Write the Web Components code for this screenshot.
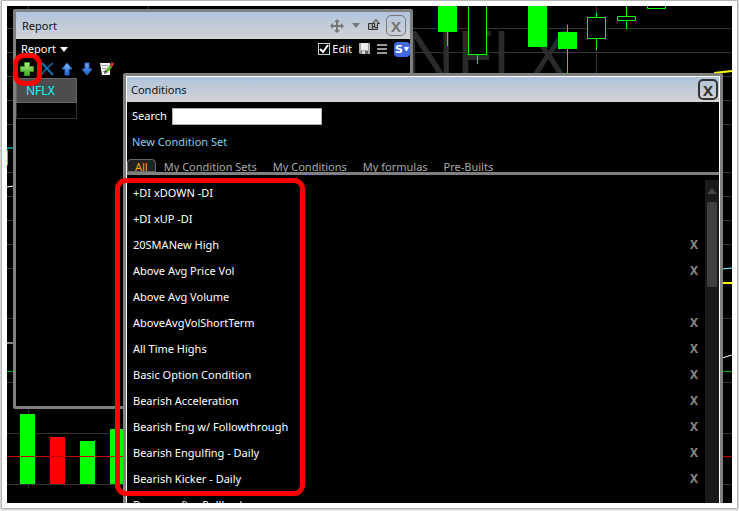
<!DOCTYPE html>
<html lang="en">
<head>
<meta charset="utf-8">
<title>Conditions</title>
<style>
  html, body { height: 100%; }
  body {
    margin: 0;
    background: #fff;
    font: 11px/16px "Noto Sans", "Open Sans", sans-serif;
    color: #fff;
  }
</style>
</head>
<body>
<desk-stage>
  <price-chart slot="back"></price-chart>

  <report-window></report-window>
  <conditions-window></conditions-window>
</desk-stage>

<script>
/**
 * Base class that fills an open shadow root from a string.
 * @class BaseElement
 * @extends HTMLElement
 */
class BaseElement extends HTMLElement {
  constructor() {
    super();
    this.attachShadow({ mode: "open" });
  }

  connectedCallback() {
    this.shadowRoot.innerHTML = this.template();
  }

  template() {
    return "";
  }
}

/**
 * White framed area which holds the chart and the windows over it.
 * @class DeskStage
 */
class DeskStage extends BaseElement {
  template() {
    return `
      <style>
        :host { display: block; box-sizing: border-box; height: 100vh; padding: 1px 2px 3px 2px; background: #f0f0f0; }
        .frame { box-sizing: border-box; height: 100%; padding: 5px; background: #fff; box-shadow: 0 0 2px 1px #999; }
        .desk { position: relative; height: 100%; overflow: hidden; background: #000; }
      </style>
      <div class="frame">
        <div class="desk"><slot name="back"></slot><slot></slot></div>
      </div>
    `;
  }
}

/**
 * Candles, volume bars and grid behind the windows.
 * @class PriceChart
 */
class PriceChart extends BaseElement {
  template() {
    const rows = [28, 52, 76, 100, 124, 172, 196, 220, 244, 268, 318, 382, 433, 484];
    const grid = rows.map((y) => `<path d="M7 ${y}.5H732"/>`).join("");
    return `
      <style>
        :host { display: block; height: 100%; }
        svg { display: block; width: 100%; height: 100%; }
        text { font: 70px "Open Sans", sans-serif; fill: #2a2a2a; }
      </style>
      <svg viewBox="7 6 725 497" preserveAspectRatio="xMinYMin slice" aria-hidden="true">
        <text x="403" y="81">NFLX</text>
        <g stroke="#333">${grid}<path d="M28.5 6V488M148.5 6V20M447.5 6V74M596.5 6V74"/></g>
        <g stroke="#0f0" fill="#0f0">
          <path d="M447.5 30V46M477.5 54V64M567.5 25V74M596.5 13V50M626.5 6V29"/>
          <path d="M438 6h19v26h-19zM528 6h19v41h-19zM558 32h19v17h-19z" stroke="none"/>
          <path d="M468.5 4V54.5H486.5V4M647.5 4V8.5H665.5V4M587.5 17.5h18v21h-18zM617.5 16.5h18v4h-18z" fill="#000"/>
        </g>
        <g fill="#0f0"><path d="M20 414h15v70H20zM80 441h15v43H80zM110 429h15v55h-15zM7 150h1v15H7z"/><path fill="#f00" d="M50 437h15v47H50z"/></g>
        <path d="M7 456.5H732" stroke="#c40000"/>
        <path d="M7 148H14" stroke="#008080" stroke-width="2"/>
        <path d="M7 187L14 186M722 358L732 355" stroke="#fff"/>
        <path d="M7 343H14" stroke="#808080" stroke-width="2"/>
        <path d="M7 371.5H732" stroke="#0a0"/>
        <path d="M714 73L732 71M722 283H732" stroke="#ff0" stroke-width="2"/>
        <path d="M722 269L732 268" stroke="#6ff"/>
      </svg>
    `;
  }
}

/**
 * Window with a title bar. Its content goes in the default slot.
 * @class ToolWindow
 */
class ToolWindow extends BaseElement {
  template() {
    return `
      <style>
        :host { display: flex; flex-direction: column; box-sizing: border-box; border: 3px solid #808080; border-radius: 2px; background: #000; }
        header {
          display: flex; align-items: center; flex: none; height: var(--bar-height, 25px); box-sizing: border-box;
          padding: 0 var(--bar-end, 1px) 0 var(--bar-indent, 4px);
          background: linear-gradient(#b0c4de, #d3d3d3); color: #111;
        }
        h2 { flex: 1; margin: 0; font: inherit; }
        .tools { display: flex; align-items: center; gap: 8px; margin-right: 6px; }
        button {
          display: grid; place-items: center;
          width: 20px; height: 21px; padding: 0; box-sizing: border-box;
          border: 1px solid; border-width: var(--close-border, 2px); border-radius: 5px;
          background: none; color: var(--close-color, #333); font: bold 15px/16px "Open Sans", sans-serif;
        }
      </style>
      <header>
        <h2>${this.getAttribute("heading")}</h2>
        <span class="tools"><slot name="tools"></slot></span>
        <button type="button" aria-label="Close">X</button>
      </header>
      <slot></slot>
    `;
  }
}

/**
 * Rounded red outline laid over a part of a window.
 * Size and place come from the element that uses it.
 * @class CalloutBox
 */
class CalloutBox extends BaseElement {
  template() {
    return `
      <style>
        :host {
          position: absolute; display: block; box-sizing: border-box;
          border: 5px solid #f00; border-radius: 11px; pointer-events: none;
        }
      </style>
    `;
  }
}

/**
 * Report window with its toolbar and the one row table.
 * @class ReportWindow
 */
class ReportWindow extends BaseElement {
  template() {
    return `
      <style>
        :host { position: absolute; left: 6px; top: 3px; }
        tool-window {
          width: 400px; height: 400px;
          --bar-height: 27px; --bar-indent: 6px; --bar-end: 4px; --close-border: 1px; --close-color: #777;
        }
        svg { display: block; flex: none; }
        .menu, .icons, .edit, label { display: flex; align-items: center; }
        .menu { height: 20px; justify-content: space-between; }
        button { padding: 0; border: 0; background: none; color: inherit; font: inherit; }
        .drop { display: flex; align-items: center; gap: 4px; padding-left: 5px; }
        .edit { gap: 7px; }
        label { gap: 2px; }
        input { appearance: none; box-sizing: border-box; width: 12px; height: 12px; margin: 0; border: 1px solid #ccc; background: #000; }
        .box { display: grid; }
        .box > * { grid-area: 1 / 1; }
        .box svg { pointer-events: none; }
        input:not(:checked) + svg { visibility: hidden; }
        .share {
          display: flex; align-items: center; justify-content: center; gap: 1px;
          width: 16px; height: 15px; border-radius: 4px; background: #4169e1; font: bold 11px/15px "DejaVu Sans", sans-serif;
        }
        .icons { height: 19px; gap: 4px; padding-left: 3px; }
        table { width: 61px; border-collapse: collapse; color: #0ff; font-size: 12px; }
        td, th { box-sizing: border-box; padding: 0 0 0 9px; border: 1px solid #333; font-weight: normal; text-align: left; }
        th { height: 24px; background: #4d4d4d; border-color: #666; }
        td { height: 16px; }
        callout-box { left: 0; top: 44px; width: 29px; height: 33px; }
      </style>
      <tool-window heading="Report">
        <svg slot="tools" width="14" height="14" viewBox="0 0 14 14" fill="#777"><path d="M7 0l3 3H8v3h3V4l3 3-3 3V8H8v3h2l-3 3-3-3h2V8H3v2L0 7l3-3v2h3V3H4z"/></svg>
        <svg slot="tools" width="8" height="5" viewBox="0 0 8 5" fill="#777"><path d="M0 0h8L4 5z"/></svg>
        <svg slot="tools" width="12" height="14" viewBox="0 0 12 14" fill="#aaa" stroke="#333"><path d="M.5 4.5h4v6h-4zM4.5 7.5h5v3h-5z"/><path d="M8 .5l3.5 4h-2v4h-3v-4h-2z"/></svg>
        <div class="menu">
          <button class="drop" type="button">Report <svg width="8" height="5" viewBox="0 0 8 5" fill="#fff"><path d="M0 0h8L4 5z"/></svg></button>
          <div class="edit">
            <label><span class="box"><input type="checkbox" checked><svg width="12" height="12" viewBox="0 0 12 12" fill="none" stroke="#fff" stroke-width="2"><path d="M2 6l3 3 5-7"/></svg></span>Edit</label>
            <svg width="11" height="12" viewBox="0 0 11 12"><path fill="#aaa" d="M0 0h11v11H1L0 10z"/><path fill="#eee" d="M2 0h7v7H2z"/><path fill="#666" d="M2 8h7v3H2z"/><path fill="#ddd" d="M3 8h3v3H3z"/></svg>
            <svg width="10" height="10" viewBox="0 0 10 10" fill="#999"><path d="M0 0h10v2H0zM0 4h10v2H0zM0 8h10v2H0z"/></svg>
            <button class="share" type="button">S<svg width="5" height="4" viewBox="0 0 5 4" fill="#fff"><path d="M0 0h5L3 4H2z"/></svg></button>
          </div>
        </div>
        <div class="icons">
          <button type="button" aria-label="Add"><svg width="16" height="16" viewBox="0 0 16 16">
            <defs><linearGradient id="g" x2="0" y2="1"><stop stop-color="#b5ef8c"/><stop offset="1" stop-color="#3fa81c"/></linearGradient></defs>
            <path fill="url(#g)" stroke="#3c9a22" d="M5.5 1.5h5v4h4v5h-4v4h-5v-4h-4v-5h4z"/>
          </svg></button>
          <button type="button" aria-label="Delete"><svg width="16" height="16" viewBox="0 0 16 16" fill="none" stroke="#1673b8">
            <path stroke-width="2" d="M3 2l11 12"/><path d="M14 2L7 8l-5 6" stroke-width="1.5"/>
          </svg></button>
          <button type="button" aria-label="Move up"><svg width="16" height="16" viewBox="0 0 16 16">
            <defs><linearGradient id="u" x2="0" y2="1"><stop stop-color="#8cc8ff"/><stop offset="1" stop-color="#1c5fd0"/></linearGradient></defs>
            <path fill="url(#u)" stroke="#2a6cc8" d="M8 2l5 6h-3v6H6V8H3z"/>
          </svg></button>
          <button type="button" aria-label="Move down"><svg width="16" height="16" viewBox="0 0 16 16">
            <defs><linearGradient id="d" x2="0" y2="1"><stop stop-color="#6fb0f5"/><stop offset="1" stop-color="#1c5fd0"/></linearGradient></defs>
            <path fill="url(#d)" stroke="#2a6cc8" d="M8 14l5-6h-3V2H6v6H3z"/>
          </svg></button>
          <button type="button" aria-label="Edit note"><svg width="16" height="16" viewBox="0 0 16 16">
            <path fill="#f4f4f4" d="M1 2h10v12H3z"/><path stroke="#999" d="M3 4.5h6M3 7.5h4M4 10.5h3"/>
            <path stroke="#63b52c" stroke-width="3" d="M7 11l5-6"/><path stroke="#d33" stroke-width="3" d="M12 5l2-3"/><path fill="#333" d="M5 13l1-4 2 2z"/>
          </svg></button>
        </div>
        <table><tr><th>NFLX</th></tr><tr><td></td></tr></table>
      </tool-window>
      <callout-box></callout-box>
    `;
  }
}

/**
 * Conditions window: search box, tabs and list of conditions.
 * @class ConditionsWindow
 */
class ConditionsWindow extends BaseElement {
  template() {
    const tabs = ["All", "My Condition Sets", "My Conditions", "My formulas", "Pre-Builts"];
    // [name, can be removed]
    const conditions = [
      ["+DI xDOWN -DI", false],
      ["+DI xUP -DI", false],
      ["20SMANew High", true],
      ["Above Avg Price Vol", true],
      ["Above Avg Volume", false],
      ["AboveAvgVolShortTerm", true],
      ["All Time Highs", true],
      ["Basic Option Condition", true],
      ["Bearish Acceleration", true],
      ["Bearish Eng w/ Followthrough", true],
      ["Bearish Engulfing - Daily", true],
      ["Bearish Kicker - Daily", true],
      ["Bounce after Pullback", false]
    ];
    const tabButtons = tabs.map((name, i) => `<button type="button" role="tab" aria-selected="${i === 0}">${name}</button>`).join("");
    const items = conditions.map(([name, removable]) => `
      <li><span>${name}</span>${removable ? `<button type="button" aria-label="Remove ${name}">X</button>` : ""}</li>`).join("");
    return `
      <style>
        :host { position: absolute; left: 116px; right: 9px; top: 67px; bottom: -8px; }
        tool-window { height: 100%; padding: 1px; background: #fff; }
        .body { display: flex; flex-direction: column; flex: 1; min-height: 0; background: #000; }
        .search { display: flex; align-items: center; flex: none; gap: 5px; height: 28px; padding-left: 5px; }
        input { width: 150px; height: 17px; box-sizing: border-box; padding: 0 2px; border: 1px solid #abadb3; background: #fff; font: inherit; }
        a { flex: none; align-self: flex-start; margin: 0 0 5px 5px; line-height: 24px; color: #87ceeb; text-decoration: none; }
        .tabs { display: flex; flex: none; height: 13px; overflow: hidden; border-bottom: 3px solid #808080; }
        .tabs button { flex: none; padding: 0 8px; border: 0; background: none; color: #a9a9a9; font: inherit; }
        .tabs [aria-selected="true"] {
          padding: 0 7px; border: 1px solid #666; border-radius: 4px 4px 0 0; background: #222; color: #ffa500; line-height: 14px;
        }
        .list { display: flex; flex: 1; min-height: 0; padding-top: 5px; }
        ul { flex: 1; margin: 0; padding: 0; overflow: hidden; list-style: none; }
        li { display: flex; justify-content: space-between; align-items: center; height: 26px; padding: 0 7px 0 6px; }
        li button { padding: 0; border: 0; background: none; color: #888; font: bold 12px/16px "Noto Sans", sans-serif; }
        .scroll { display: flex; flex-direction: column; align-items: center; gap: 8px; width: 14px; padding-top: 8px; background: #1a1a1a; }
        .thumb { width: 10px; height: 85px; border-radius: 2px; background: #404040; }
        callout-box { left: -8px; top: 105px; width: 190px; height: 318px; }
      </style>
      <tool-window heading="Conditions">
        <div class="body">
          <div class="search"><label for="q">Search</label><input id="q" type="text"></div>
          <a href="#">New Condition Set</a>
          <div class="tabs" role="tablist">${tabButtons}</div>
          <div class="list">
            <ul>${items}</ul>
            <div class="scroll">
              <svg width="10" height="6" viewBox="0 0 10 6" fill="#444"><path d="M0 6h10L5 0z"/></svg>
              <div class="thumb"></div>
            </div>
          </div>
        </div>
      </tool-window>
      <callout-box></callout-box>
    `;
  }
}

customElements.define("desk-stage", DeskStage);
customElements.define("price-chart", PriceChart);
customElements.define("tool-window", ToolWindow);
customElements.define("callout-box", CalloutBox);
customElements.define("report-window", ReportWindow);
customElements.define("conditions-window", ConditionsWindow);
</script>
</body>
</html>
